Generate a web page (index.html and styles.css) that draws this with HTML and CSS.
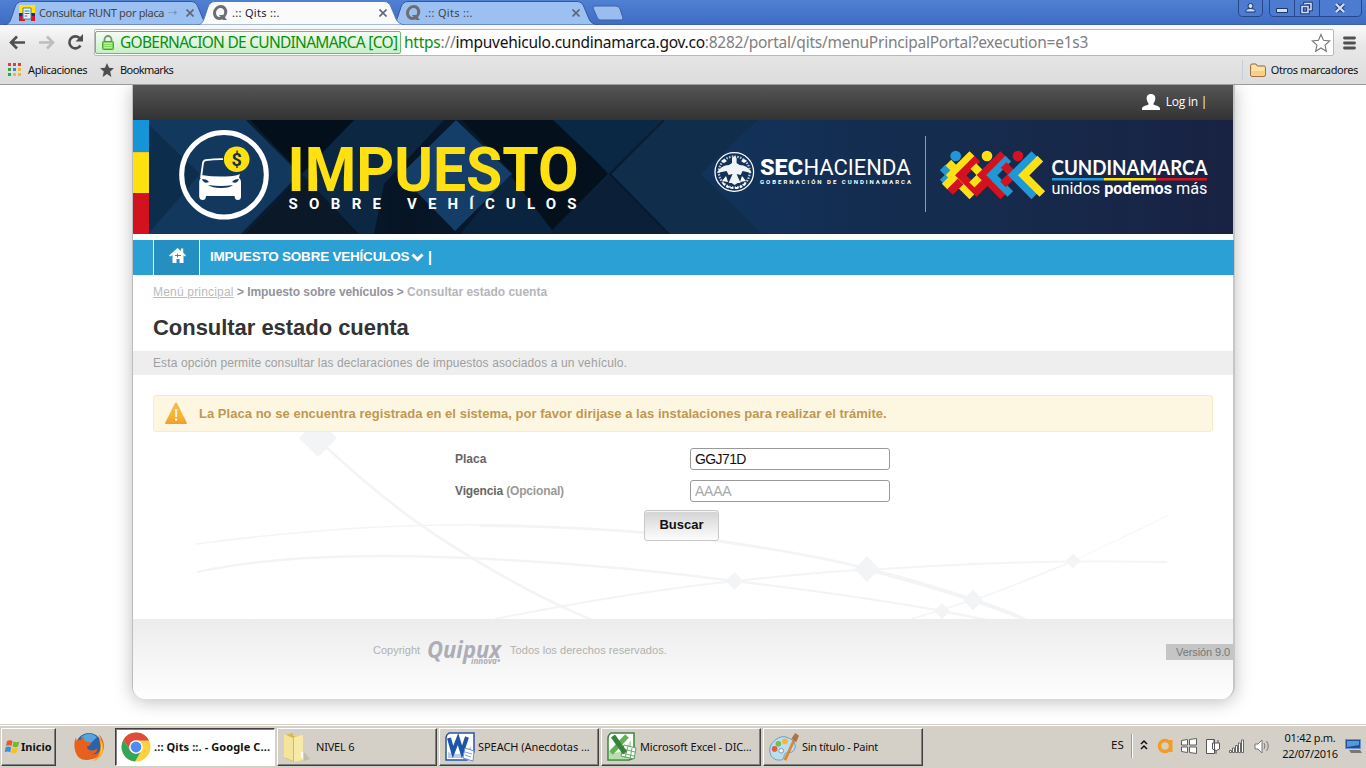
FILE: index.html
```html
<!DOCTYPE html>
<html lang="es">
<head>
<meta charset="utf-8">
<title>.:: Qits ::.</title>
<link rel="stylesheet" href="styles.css">
</head>
<body>
<header class="tabstrip">
  <div class="tab tab-first">
    <svg class="tab-shape" viewBox="0 0 208 25"><path d="M0 25C5 24.500 6 22 8 16L11 7Q13 1.500 18 1.500H187Q192 1.500 194 7L199 19Q201 24 208 25Z"/></svg>
    <svg class="fav" viewBox="0 0 16 16"><path fill="#ffe600" d="M0 0h16v8H0z"/><path fill="#17308c" d="M0 8h16v5H0z"/><path fill="#d5172b" d="M0 11h6v5H0zM12 11h4v5h-4z"/><path fill="#eef5fa" stroke="#557e9b" d="M4 3h8v11H4z"/><path stroke="#3b718f" d="M5.500 6h5M5.500 8.500h5M5.500 11h3"/></svg>
    <span class="tab-title title-runt">Consultar RUNT por placa</span><span class="tab-fade">⇢</span><svg class="close" viewBox="0 0 8 8"><path d="M.5.5l7 7M7.500.5l-7 7"/></svg>
  </div>
  <div class="tab tab-active">
    <svg class="tab-shape" viewBox="0 0 208 25"><path d="M0 25C5 24.500 6 22 8 16L11 7Q13 1.500 18 1.500H187Q192 1.500 194 7L199 19Q201 24 208 25Z"/></svg>
    <svg class="fav" viewBox="0 0 16 16"><ellipse cx="8.200" cy="7.500" rx="5.600" ry="6" fill="none" stroke="#6d6e73" stroke-width="3" transform="skewX(-6) translate(.7 0)"/><path d="M7 10h4l4 5h-4z" fill="#6d6e73"/></svg>
    <span class="tab-title">.:: Qits ::.</span><svg class="close" viewBox="0 0 8 8"><path d="M.5.5l7 7M7.500.5l-7 7"/></svg>
  </div>
  <div class="tab tab-last">
    <svg class="tab-shape" viewBox="0 0 208 25"><path d="M0 25C5 24.500 6 22 8 16L11 7Q13 1.500 18 1.500H187Q192 1.500 194 7L199 19Q201 24 208 25Z"/></svg>
    <svg class="fav" viewBox="0 0 16 16"><ellipse cx="8.200" cy="7.500" rx="5.600" ry="6" fill="none" stroke="#6d6e73" stroke-width="3" transform="skewX(-6) translate(.7 0)"/><path d="M7 10h4l4 5h-4z" fill="#6d6e73"/></svg>
    <span class="tab-title">.:: Qits ::.</span><svg class="close" viewBox="0 0 8 8"><path d="M.5.5l7 7M7.500.5l-7 7"/></svg>
  </div>
  <svg class="newtab" viewBox="0 0 32 16"><path d="M1 3Q1 1 3 1H24Q27 1 28 4L31 13Q31 15 29 15H8Q6 15 5 12Z"/></svg>
  <svg class="winbtns" viewBox="0 0 126 18">
    <g fill="#4c7bd0" stroke="#27478a"><path d="M.5-1V12Q.5 16.500 5 16.500H20Q24.500 16.500 24.500 12V-1ZM31.500-1V12Q31.500 16.500 36 16.500H119Q123.500 16.500 123.500 12V-1ZM56.500-1V16M81.500-1V16"/></g>
    <g fill="#cfddf7" stroke="#1c3768"><circle cx="12.500" cy="6" r="2.500"/><path d="M8 12V10.500Q8 8.500 12.500 8.500T17 10.500V12ZM38.500 8.500h11v4h-11z"/><path fill="none" stroke="#1c3768" stroke-width="3.400" d="M67 4.500V3.500H73V9.500H71M64 6.500h6v6h-6z"/><path fill="none" stroke="#cfddf7" stroke-width="1.600" d="M67 4.500V3.500H73V9.500H71M64 6.500h6v6h-6z"/><path fill="none" stroke="#1c3768" stroke-width="4" d="M98.500 4.500l7 7M105.500 4.500l-7 7"/><path fill="none" stroke="#cfddf7" stroke-width="2.400" d="M98 4l8 8M106 4l-8 8"/></g>
  </svg>
</header>

<section class="toolbar">
  <div class="navrow">
    <svg class="nav-icons" viewBox="0 0 94 28">
      <g fill="none" stroke-width="2.600"><path stroke="#4f4f4f" d="M25 13.500H11M17 7.500l-6 6 6 6"/><path stroke="#bdbdbd" d="M39 13.500H53M47 7.500l6 6-6 6"/><path stroke="#4f4f4f" d="M80.500 16.500A6 6 0 1 1 79.500 9"/></g><path fill="#4f4f4f" d="M83 5v7.500h-7.500z"/>
    </svg>
    <div class="omnibox">
      <div class="ev"><svg viewBox="0 0 12 15"><path d="M2.500 7V4.500a3.500 3.500 0 0 1 7 0V7" fill="none" stroke="#7c9478" stroke-width="1.800"/><rect x=".6" y="6.500" width="10.800" height="8" rx=".8" fill="#85d663" stroke="#4aa032"/><path stroke="#bdeca9" d="M2 8.500h8M2 10.500h8M2 12.500h8"/></svg><span>GOBERNACION DE CUNDINAMARCA [CO]</span></div>
      <div class="url"><span class="url-s">https</span><span class="url-m">://</span>impuvehiculo.cundinamarca.gov.co<span class="url-m">:8282/portal/qits/menuPrincipalPortal?execution=e1s3</span></div>
      <svg class="star" viewBox="0 0 20 20"><path d="M10 1.500l2.500 5.800 6.200.6-4.700 4.200 1.400 6.200-5.400-3.300-5.400 3.300 1.400-6.200L1.300 7.900l6.200-.6z" fill="#fff" stroke="#777" stroke-width="1.100"/></svg>
    </div>
    <svg class="menu" viewBox="0 0 13 14"><path stroke="#505050" stroke-width="2.800" stroke-linecap="round" d="M1.500 2h10M1.500 7h10M1.500 12h10"/></svg>
  </div>
  <div class="bookmarks">
    <svg class="apps" viewBox="0 0 14 14"><path fill="#e33e36" d="M0 0h3v3H0zM5 0h3v3H5zM10 0h3v3h-3z"/><path fill="#32a050" d="M0 5h3v3H0zM0 10h3v3H0z"/><path fill="#3a83ee" d="M5 5h3v3H5z"/><path fill="#f7b529" d="M10 5h3v3h-3zM5 10h3v3H5zM10 10h3v3h-3z"/></svg>
    <span class="bm-apps">Aplicaciones</span>
    <svg class="bm-star" viewBox="0 0 14 14"><path fill="#4e4e4e" d="M7 0l2 4.800 5 .4-3.800 3.300L11.400 14 7 11 2.600 14l1.200-5.500L0 5.200l5-.4z"/></svg>
    <span class="bm-marks">Bookmarks</span>
    <div class="others"><svg viewBox="0 0 16 14"><path fill="#fde3a5" stroke="#98653b" d="M.6 12V2.500Q.6 1 2 1H6l1.300 2H14q1.400 0 1.400 1.400V12q0 1.400-1.400 1.400H2Q.6 13.400.6 12z"/><path fill="#f8cf82" d="M2 8h12v4.500H2z"/></svg><span>Otros marcadores</span></div>
  </div>
</section>

<main class="viewport">
  <div class="page">
    <div class="topbar"><svg viewBox="0 0 18 17"><path fill="#fff" d="M9 0c3.200 0 4.600 2.300 4.300 5-.2 2-1 3.300-1.700 4.200v1.600c3.200.8 6.400 1.700 6.400 4V16H0v-1.200c0-2.300 3.200-3.200 6.400-4V9.200C5.700 8.300 4.900 7 4.700 5 4.400 2.300 5.800 0 9 0z"/></svg><span>Log in |</span></div>
    <svg class="banner" viewBox="133 120 1100 114">
      <defs>
        <linearGradient id="b0" x1="0" x2="1"><stop offset="0" stop-color="#0c2c4c"/><stop offset=".25" stop-color="#061424"/><stop offset=".4" stop-color="#0a2038"/><stop offset=".53" stop-color="#112f4e"/><stop offset=".75" stop-color="#152c4e"/><stop offset="1" stop-color="#192243"/></linearGradient>
        <linearGradient id="b2" x1="0" x2="1"><stop offset="0" stop-color="#12335b"/><stop offset="1" stop-color="#142c4e"/></linearGradient>
      </defs>
      <path fill="url(#b0)" d="M133 120h1100v114H133z"/>
      <path fill="#12385e" d="M149 120h98l54 54-58 60H149z"/><path fill="#0d2d4c" d="M149 125l51 49-51 59z"/>
      <path fill="#03101c" d="M250 120h105l-53 54z"/><path fill="#0a1827" d="M302 176l-57 58h112z"/>
      <path fill="#0b2742" d="M354 120h90l-60 64-10 50h-15l-57-60z"/>
      <path fill="#143e68" d="M456 120l56 54-57 57-55-56z"/><path fill="#04111d" d="M462 120h96l50 54-60 60H460l53-60z"/>
      <path fill="#0a2440" d="M510 175l45 59h-95z"/>
      <path fill="#0a2743" d="M553 120h105l-48 54z"/><path fill="#0b2038" d="M610 174l58 60H550z"/>
      <path fill="#102e4c" d="M663 120h95l-57 54 61 60h-93l-58-60z"/><path fill="url(#b2)" d="M758 120h142v114H763l-62-60z"/>
      <path fill="none" stroke="#06121f" stroke-width="2" opacity=".6" d="M664 120l-54 54 59 60M247 120l54 54-59 60"/>
      <path fill="#1595d8" d="M133 120h16v32h-16z"/><path fill="#ffe111" d="M133 152.500h16V193h-16z"/><path fill="#d3121f" d="M133 193h16v41h-16z"/><path fill="#f0ca25" d="M133 152h16v1h-16z"/>
      <circle cx="224" cy="174.700" r="42.300" fill="none" stroke="#fff" stroke-width="5"/>
      <path fill="none" stroke="#fff" stroke-width="1.800" d="M201 178l2-15q.5-2.500 3-2.800 9-1.200 17-1"/>
      <path fill="#fff" d="M201 175q10 1.500 20 1.500t17-1.500q3-2 2-1.500l-1 4q2 2 2 5v14q0 3.500-3.200 3.500t-3.200-4H206q0 4-3.200 4t-3.600-3.500V183q0-4 1.800-5z"/>
      <path fill="#12385e" d="M202 179q5 0 7 3-5 2.500-7-3zM239 179q-5 0-7 3 5 2.500 7-3zM208 185q13 2 25 0-3 3-12 3t-13-3z"/>
      <circle cx="236.700" cy="159.300" r="12.800" fill="#ffe111"/><text class="b-coin" x="236.700" y="166">$</text>
      <text class="b-impuesto" x="287.500" y="190.800" textLength="291" lengthAdjust="spacingAndGlyphs">IMPUESTO</text>
      <text class="b-sobre" x="288.500" y="209" textLength="92.500">SOBRE</text><text class="b-sobre" x="407" y="209" textLength="169.500">VEHÍCULOS</text>
      <g fill="none" stroke="#fff"><circle cx="734.300" cy="172" r="19.300" stroke-width="1.300"/><circle cx="734.300" cy="172" r="15.500" stroke-width="2.200" stroke-dasharray="1.500 1.300" opacity=".75"/><path stroke-width="2" d="M723 183q3 5 11.300 5t11.300-5" stroke-dasharray="3 1.500"/></g>
      <path fill="#f0f4f8" d="M717 173q4-8 12-8l3-2v-5l2.300-2 2.300 2v5l3 2q8 0 12 8l-9-2-2 4-4-1 4 9h-3l-3 2-3-2h-3l4-9-4 1-2-4z"/><path fill="#fff" d="M724 159l3 2-3 2-3-2zM744 159l3 2-3 2-3-2zM722 181l4-5 2 6zM746 181l-4-5-2 6z"/>
      <text class="b-sec" x="760" y="174.500" textLength="43" lengthAdjust="spacingAndGlyphs">SEC</text><text class="b-hac" x="803.500" y="174.500" textLength="107" lengthAdjust="spacingAndGlyphs">HACIENDA</text>
      <text class="b-gob" x="760" y="183.500" textLength="151">GOBERNACIÓN DE CUNDINAMARCA</text>
      <path stroke="#8d9cb5" d="M925.500 136v76"/>
      <g transform="translate(900 110) scale(.3333)" fill="none" stroke-width="24">
        <path stroke="#2097d6" d="M128 172l23 23-23 23"/>
        <path stroke="#ffe111" d="M145 158l28 28M217 132l-63 63 63 64M134 230l32-32"/>
        <path stroke="#d3121f" d="M232 146l-50 50 56 56M150 246l32-32"/>
        <path stroke="#ffe111" d="M220 168l26 27-30 30"/>
        <path stroke="#d3121f" d="M310 132l-63 63 63 64"/>
        <path stroke="#2097d6" d="M325 146l-50 50 56 56"/><path stroke="#d3121f" d="M228 245l40-40"/>
        <path stroke="#d3121f" d="M311 165l28 28-30 30"/>
        <path stroke="#2097d6" d="M403 132l-63 63 63 64"/>
        <path stroke="#ffe111" d="M421 146l-50 50 56 56"/>
        <circle cx="167" cy="138" r="16" fill="#2097d6" stroke="none"/><circle cx="261" cy="138" r="16" fill="#ffe111" stroke="none"/><circle cx="354" cy="138" r="16" fill="#d3121f" stroke="none"/>
      </g>
      <text class="b-cund" x="1051.500" y="174.500" textLength="156" lengthAdjust="spacingAndGlyphs">CUNDINAMARCA</text>
      <path fill="#2097d6" d="M1052 178h52v2.500h-52z"/><path fill="#ffe111" d="M1104 178h52v2.500h-52z"/><path fill="#d3121f" d="M1156 178h51v2.500h-51z"/>
      <text class="b-uni" x="1051.500" y="194" textLength="156" lengthAdjust="spacingAndGlyphs">unidos <tspan class="b-strong">podemos</tspan> más</text>
    </svg>
    <nav class="mainnav">
      <a class="home"><svg viewBox="0 0 17 16"><path fill="#fff" d="M8.500 0L12 3V.5h2.200v4.300L17 7.500l-1 .9-1.500-1.200V15H10.500v-4h-3v4h-4V7.200L1 8.400l-1-.9z"/><path stroke="#268fc1" d="M6 7.500h6M8.500 5.500v4"/></svg></a>
      <a class="navitem"><span>IMPUESTO SOBRE VEHÍCULOS</span><svg viewBox="0 0 13 9"><path d="M1.500 1.500l5 5 5-5" fill="none" stroke="#fff" stroke-width="3"/></svg><i>|</i></a>
    </nav>
    <div class="crumbs"><a>Menú principal</a> <b>&gt; Impuesto sobre vehículos &gt; <span>Consultar estado cuenta</span></b></div>
    <h1>Consultar estado cuenta</h1>
    <p class="lead">Esta opción permite consultar las declaraciones de impuestos asociados a un vehículo.</p>
    <div class="alert"><svg viewBox="0 0 22 23"><defs><linearGradient id="w" y2="1" x2="0"><stop stop-color="#f4b55e"/><stop offset=".6" stop-color="#fbb52c"/><stop offset="1" stop-color="#ee9c35"/></linearGradient></defs><path fill="url(#w)" d="M11 .5Q11.700 .5 12.300 1.700L21.700 20.500Q22.300 22 21 22H1Q-.3 22 .3 20.500L9.700 1.700Q10.300 .5 11 .5z"/><path fill="#fff6dc" d="M9.800 7h2.600l-.5 8h-1.600zM10 16.500h2.200v2.200H10z"/></svg><span>La Placa no se encuentra registrada en el sistema, por favor dirijase a las instalaciones para realizar el trámite.</span></div>
    <form class="search">
      <svg class="deco" viewBox="133 432 1100 187">
        <g fill="none" stroke="#f3f4f6"><path stroke-width="2.700" d="M326 447C390 506 430 533 477 561Q535 596 592 620"/><path stroke-width="1.500" d="M196 544Q380 520 530 526"/><path stroke-width="2.800" d="M480 525.500Q620 527 718 541T867 569"/><path stroke-width="4" d="M867 569Q925 584 973 600T1026 621"/><path stroke-width="2.300" d="M197 572Q290 552 440 557T735 581Q860 596 942 611L992 621"/><path stroke-width="1.800" d="M495 619Q630 592 735 581T867 570Q1020 559 1167 562"/><path stroke-width="1.400" d="M912 619Q950 607 973 600T1073 561"/><path stroke-width=".8" d="M1073 561Q1122 538 1169 515"/></g>
        <path fill="#f3f4f6" d="M318 419l19 19-19 19-19-19zM734.500 572l9 9-9 9-9-9zM867 556l12.500 13-12.500 13-12.500-13zM973 589.500l10 10.500-10 10.500-10-10.500zM942 603l8 8-8 8-8-8zM1073 553.500l7.500 7.500-7.500 7.500-7.500-7.500z"/>
      </svg>
      <div class="fields">
        <label for="placa">Placa</label><input id="placa" value="GGJ71D">
        <label for="vig" class="l-vig">Vigencia <span>(Opcional)</span></label><input id="vig" placeholder="AAAA">
      </div>
      <button type="button">Buscar</button>
    </form>
    <footer>
      <div class="copy"><span class="c1">Copyright</span><svg viewBox="0 0 76 28"><text class="q" x="0" y="19" textLength="74" lengthAdjust="spacingAndGlyphs">Quipux</text><text class="inn" x="44" y="25" textLength="29" lengthAdjust="spacingAndGlyphs">innova•</text></svg><span class="c2">Todos los derechos reservados.</span></div>
      <div class="version">Versión 9.0</div>
    </footer>
  </div>
</main>

<div class="taskbar">
  <div class="start"><svg viewBox="0 0 17 16"><path fill="#e65a2c" d="M3 2q3-1.500 5.500 0L7.500 7Q5 5.500 2 7z"/><path fill="#78b52e" d="M9.500 2.500q3 1.500 6 0L14 7.500q-2.500 1.500-5.500 0z"/><path fill="#3b8ed8" d="M1.700 8.200q3-1.500 5.500 0l-1 5q-2.500-1.500-5.500 0z"/><path fill="#f9c126" d="M8.200 8.700q3 1.500 5.700 0l-1.300 5q-2.500 1.500-5.500 0z"/></svg><b>Inicio</b></div>
  <svg class="firefox" viewBox="0 0 30 30"><circle cx="15" cy="14" r="13" fill="#2b62a8"/><path fill="#54a6dc" d="M7 5q8-7 16 0l-6 6-8-1z"/><path fill="#e8601c" d="M2 5q0 3 1 4 2-2 4-1.500Q8 5 10 4.500 9 8 12 9.500l5 1q0 3-4 4 0 3 4 4 4 .5 6-2 1 4-5 6 8 0 9-8 1-7-2-12 5 5 5 12-1 11-14 13Q5 30 1.500 20-1 12 2 5z"/><path fill="#f8a620" d="M25 5q5 5 4.500 13-2 9-11 11.500Q27 24 26.500 14z"/><path fill="#fbcf3d" d="M27.500 10q2.500 8-2 14 2-6 2-14z"/></svg>
  <div class="task active"><svg viewBox="0 0 30 30"><circle cx="15" cy="15" r="14.500" fill="#fdd23e"/><path fill="#df4b3f" d="M2.500 7.700A14.500 14.500 0 0 1 28 8.500H15a6.500 6.500 0 0 0-6 9.500z"/><path fill="#35a359" d="M2.500 7.700A14.500 14.500 0 0 0 14 29.500L20.600 18A6.500 6.500 0 0 1 9 18z"/><circle cx="15" cy="15" r="6.800" fill="#fff"/><circle cx="15" cy="15" r="5.400" fill="#4c8bf5"/></svg><b>.:: Qits ::. - Google C...</b></div>
  <div class="task"><svg viewBox="0 0 30 30"><path fill="#d8b952" d="M2 3l8-2v3l10 0v24l-9 2-9-4z"/><path fill="#f5e49b" d="M1 2l9 4v23l-9-4z"/><path fill="#f7eaa9" d="M11 5l9-2v25l-9 2z"/><path fill="#b7b3a0" opacity=".7" d="M21 20l6 7-6 2z"/><path fill="#fff" d="M18 20h2v6h-2z"/></svg><span>NIVEL 6</span></div>
  <div class="task t-word"><svg viewBox="0 0 30 30"><path fill="#fff" stroke="#2456a4" stroke-width="1.500" d="M4 1h25v19l-7 8H1V6q0-3 3-5z"/><path fill="#b9cdea" d="M3 20q14 6 23-6v12H3z"/><path fill="none" stroke="#1e55a8" stroke-width="4" d="M4 6l4 14 5-13 4 13L22 5"/><path fill="#fff" stroke="#6b92c4" d="M20 16l9 3-1 10-10-3z"/><path stroke="#7ea2cf" d="M20 20l7 2M20 23l6 2"/></svg><span>SPEACH (Anecdotas ...</span></div>
  <div class="task t-excel"><svg viewBox="0 0 30 30"><path fill="#fff" stroke="#3a8639" stroke-width="1.500" d="M4 1h23v25l-5 2H1V6q0-3 3-5z"/><path fill="#b9dcb1" d="M2 20q14 4 22-12v19H2z"/><path fill="#fff" stroke="#5ba357" d="M17 13l12 3-2 11-13-3z"/><path stroke="#69ae64" d="M16 17l12 3M15 21l12 3M21 14l-3 12M25 16l-2 11"/><path stroke="#62b253" stroke-width="5" d="M20 4L4 21"/><path stroke="#34843a" stroke-width="5" d="M6 4l12 17"/></svg><span>Microsoft Excel - DIC...</span></div>
  <div class="task t-paint"><svg viewBox="0 0 32 30"><path fill="#bcdcf0" stroke="#659bc0" d="M2 24Q-2 15 6 8T22 6q6 2 6 9-1 6-7 6-5 0-5 4t-5 4q-6 0-9-5z"/><circle cx="6" cy="17" r="3" fill="#e35a3c"/><circle cx="10" cy="11.500" r="3" fill="#76bd4c"/><circle cx="17" cy="9" r="3" fill="#f7b635"/><circle cx="13" cy="19" r="2.500" fill="#edf6fa" stroke="#7199b5"/><path stroke="#d98835" stroke-width="3" d="M17 29L27 7"/><path fill="#a97645" d="M24 6l4-6 4 3-3 7z"/></svg><span>Sin título - Paint</span></div>
  <div class="tray">
    <span class="lang">ES</span><i class="sep"></i>
    <svg class="tray-icons" viewBox="0 0 140 22"><g fill="none"><path stroke="#111" stroke-width="1.500" d="M4 9l3-3 3 3M4 14l3-3 3 3"/><circle cx="28" cy="11" r="5.500" stroke="#f49b22" stroke-width="3.500"/><path stroke="#f49b22" stroke-width="3" d="M34 5v12"/><path stroke="#5f5f5f" fill="#fff" d="M44.500 5.500l6-1V10h-6zM52.500 4.500l7-1V10h-7zM44.500 12h6v5.500l-6-1zM52.500 12h7v6.500l-7-1z"/><path stroke="#555" fill="#fff" d="M69.500 4.500h8v14h-8zM75.500 8h7v6q-3 3-7 0zM77 8V5M81 8V5M79 15v4"/><path stroke="#666" fill="#fff" d="M92.500 15.500h2v2h-2zM95.500 13h2v4.500h-2zM98.500 10.500h2v7h-2zM101.500 8h2v9.500h-2zM104.500 5h2v12.500h-2z"/><path stroke="#777" fill="#fff" d="M118 9h3l4-4v13l-4-4h-3z"/><path stroke="#777" d="M127 8q2 3 0 6M129.500 6q3.500 5 0 10"/></g></svg>
    <div class="clock"><span>01:42 p.m.</span><span>22/07/2016</span></div>
    <svg class="desk" viewBox="0 0 17 15"><path fill="#244d94" stroke="#6e91c7" d="M.5.5h15v9H.5z"/><path fill="#4f9be0" d="M2 2h12v4L2 8z"/><path fill="#777" d="M4 11h11l2 3H6z"/></svg>
  </div>
</div>
</body>
</html>
```

FILE: styles.css
```css
* { box-sizing: border-box; }
html, body { margin: 0; height: 768px; overflow: hidden; }
body { display: flex; flex-direction: column; background: #fff; font-family: "Liberation Sans", Arial, sans-serif; }
svg { display: block; flex: none; }

.tabstrip { height: 25px; flex: none; display: flex; align-items: flex-start; padding-left: 4px; background: linear-gradient(#4f80d2, #3f6dc5); font: 11px "Noto Sans", sans-serif; color: #444; border-bottom: 1px solid #3a62ad; }
.tab { position: relative; width: 208px; height: 25px; flex: none; display: flex; align-items: center; padding-left: 15px; margin-right: -15px; }
.tab > * { position: relative; }
.tab .tab-shape { position: absolute; left: 0; top: 0; width: 100%; height: 25px; }
.tab-shape path { fill: #9dc0f3; stroke: #36599d; }
.tab-active { z-index: 2; color: #222; }
.tab-active .tab-shape path { fill: #fafafa; stroke: #557ebf; }
.tab-last { margin-right: -6px; }
.fav { width: 16px; height: 16px; margin-right: 4px; }
.tab-title { letter-spacing: .3px; padding-bottom: 1px; }
.title-runt { letter-spacing: -.33px; }
.tab-fade { margin-left: 4px; padding-bottom: 2px; color: #7090c0; }
.close { position: absolute !important; left: 182px; top: 9px; width: 8px; height: 8px; }
.close path { stroke: #5c6778; stroke-width: 1.600; }
.newtab { width: 32px; height: 16px; margin-top: 5px; }
.newtab path { fill: #9bbcee; stroke: #3c63aa; }
.winbtns { width: 126px; height: 18px; margin-left: auto; margin-right: 2px; }

.toolbar { height: 60px; flex: none; background: linear-gradient(#fafafa, #e8e8e8 35%, #dcdcdc); border-bottom: 1px solid #9b9b9b; }
.navrow { display: flex; padding-top: 4px; height: 32px; }
.nav-icons { width: 94px; height: 28px; }
.omnibox { width: 1240px; height: 27px; display: flex; align-items: center; background: #fff; border: 1px solid #b9b9b9; border-radius: 2px; font: 15.500px "Noto Sans", sans-serif; white-space: nowrap; }
.ev { width: 306px; flex: none; height: 23px; display: flex; align-items: center; padding-left: 6px; gap: 6px; border: 1px solid #6dbb6d; border-radius: 2px; background: linear-gradient(#f4fcf4, #c8efc8); color: #0c8f0c; }
.ev svg { width: 12px; height: 15px; }
.ev span { letter-spacing: -.72px; padding-bottom: 1px; }
.url { margin-left: 3px; padding-bottom: 1px; color: #111; letter-spacing: -.245px; }
.url-s { color: #0c8f0c; }
.url-m { color: #808080; }
.star { width: 20px; height: 20px; margin-left: auto; margin-right: 2px; }
.menu { width: 13px; height: 14px; margin: 7px 0 0 9px; }
.bookmarks { display: flex; align-items: center; height: 26px; padding-left: 8px; font: 11px "Noto Sans", sans-serif; color: #111; }
.apps { width: 14px; height: 14px; margin-right: 6px; }
.bm-apps { width: 72px; letter-spacing: -.4px; padding-bottom: 1px; }
.bm-star { width: 14px; height: 14px; margin-right: 6px; }
.bm-marks { letter-spacing: -.58px; padding-bottom: 1px; }
.others { margin-left: auto; display: flex; align-items: center; gap: 5px; border-left: 1px solid #c3d0dc; height: 20px; padding: 0 8px 0 7px; letter-spacing: -.37px; }
.others span { padding-bottom: 1px; }
.others svg { width: 16px; height: 14px; }

.viewport { height: 639px; flex: none; padding-left: 132px; overflow: hidden; }
.page { width: 1103px; height: 614px; overflow: visible; border: solid #bdbdbd; border-width: 0 2px 0 1px; border-right-color: #c6c6c6; border-radius: 0 0 13px 13px; background: #fff; box-shadow: 0 3px 18px rgba(0,0,0,.25); }
.topbar { height: 35px; display: flex; align-items: center; justify-content: flex-end; padding-right: 26px; gap: 6px; background: linear-gradient(#555, #333); color: #fff; font: 12px "Open Sans", sans-serif; letter-spacing: -.25px; }
.topbar span { padding-bottom: 2px; }
.topbar svg { width: 18px; height: 17px; }
.banner { width: 1100px; height: 114px; }
.banner text { fill: #fff; font-family: Roboto, sans-serif; }
.banner .b-coin { font: bold 18px Roboto; fill: #14304a; text-anchor: middle; }
.banner .b-impuesto { font-size: 61.500px; font-weight: 700; fill: #ffe111; }
.b-sobre { font-size: 15px; font-weight: 700; }
.b-sec { font-size: 22.500px; font-weight: 900; }
.b-hac { font-size: 22.500px; font-weight: 400; }
.b-gob { font-size: 6px; font-weight: 700; }
.banner .b-cund { font-family: Lato, sans-serif; font-size: 21.500px; font-weight: 700; }
.b-uni { font-size: 16px; }
.b-strong { font-weight: 700; }
.mainnav { width: 1101px; height: 35px; margin-top: 6px; display: flex; padding-left: 20px; background: #2aa0d5; color: #fff; }
.home { width: 47px; display: flex; align-items: center; justify-content: center; background: #268fc1; border: solid #fff; border-width: 0 1px; padding: 0 0 4px 1px; }
.home svg { width: 17px; height: 16px; }
.navitem { display: flex; align-items: center; padding-left: 10px; font-size: 14px; font-weight: 700; height: 33px; white-space: nowrap; }
.navitem span { width: 201px; font-size: 13.500px; letter-spacing: -.22px; }
.navitem svg { width: 13px; height: 9px; margin-top: 1px; }
.navitem i { font-style: normal; margin-left: 4px; }
.crumbs { padding: 10px 20px 0; height: 38px; font-size: 12px; line-height: 14px; color: #bbb; }
.crumbs a { text-decoration: underline; letter-spacing: .19px; }
.crumbs b { color: #93939c; letter-spacing: -.07px; }
.crumbs b span { color: #b5b5bb; letter-spacing: 0; }
h1 { margin: 0; padding-left: 20px; height: 38px; font-size: 22px; line-height: 29px; letter-spacing: -.04px; color: #333; }
.lead { margin: 0; height: 24px; padding-left: 20px; line-height: 24px; font-size: 12px; letter-spacing: .115px; color: #9f9f9f; background: #eee; }
.alert { height: 37px; margin: 20px 20px 0; display: flex; align-items: center; gap: 12px; padding-left: 11px; background: #fdf7e1; border: 1px solid #faebc8; border-radius: 3px; color: #c09853; font-size: 13px; font-weight: 700; letter-spacing: .03px; }
.alert svg { width: 22px; height: 23px; }
.search { position: relative; height: 187px; margin: 0; padding-top: 16px; }
.deco { position: absolute; left: 0; top: 0; width: 1100px; height: 187px; }
.fields { position: relative; display: grid; grid-template-columns: 235px 200px; grid-auto-rows: 22px; row-gap: 10px; margin-left: 322px; align-items: center; font-size: 12px; font-weight: 700; color: #666; }
.fields label span { color: #999; }
.fields .l-vig { letter-spacing: -.15px; }
.fields input { width: 200px; height: 22px; margin: 0; padding: 0 4px; border: 1px solid #999; border-radius: 3px; background: #fff; color: #111; font: 14px "Liberation Sans", Arial, sans-serif; letter-spacing: -.6px; }
.fields input::placeholder { color: #a9a9a9; letter-spacing: -.25px; }
.search button { position: relative; display: block; width: 75px; height: 31px; margin: 8px 0 0 511px; padding: 0 0 2px; border: 1px solid #c8c8c8; border-radius: 3px; background: linear-gradient(#d3d3d3, #fdfdfd); box-shadow: inset 0 1px #f5f5f5; font: bold 13px "Liberation Sans", Arial, sans-serif; color: #111; }
footer { position: relative; height: 80px; display: flex; justify-content: space-between; padding-left: 240px; background: linear-gradient(#ececec, #fefefe); border-radius: 0 0 12px 12px; font-size: 11px; color: #b1b1b1; }
.copy { display: flex; align-items: center; height: 62px; }
.c1 { width: 54px; }
.copy svg { width: 76px; height: 28px; margin-top: 6px; margin-right: 7px; overflow: visible; }
.c2 { letter-spacing: .05px; }
.q { font: italic bold 24px "Open Sans", sans-serif; fill: #adadb6; }
.inn { font: italic bold 8px "Open Sans", sans-serif; fill: #adadb6; }
.version { width: 67px; height: 16px; margin-top: 25px; padding-left: 10px; line-height: 16px; letter-spacing: -.08px; background: #c5c5c5; color: #777; white-space: nowrap; }

.taskbar { height: 44px; flex: none; display: flex; align-items: flex-start; padding: 3px 4px 0 1px; background: #d4d0c8; border-top: 1px solid #d4d0c8; box-shadow: inset 0 1px #fff; font: 11px "Noto Sans", sans-serif; color: #111; white-space: nowrap; }
.start { width: 55px; height: 38px; display: flex; align-items: center; padding-left: 2px; border: 1px solid; border-color: #fff #404040 #404040 #fff; box-shadow: inset -1px -1px #808080; letter-spacing: 0; }
.start b, .task b, .task span { padding-bottom: 2px; }
.start svg { width: 17px; height: 16px; }
.firefox { width: 30px; height: 30px; margin: 4px 11px 0 18px; }
.task { width: 160px; height: 38px; margin-right: 2px; display: flex; align-items: center; padding-left: 5px; border: 1px solid; border-color: #fff #404040 #404040 #fff; box-shadow: inset -1px -1px #808080; letter-spacing: -.2px; }
.task svg { width: 30px; height: 30px; margin-right: 3px; }
.t-word { letter-spacing: -.05px; }
.t-excel { letter-spacing: -.12px; }
.t-paint { letter-spacing: -.3px; }
.active { background: #fff; border-color: #404040 #fff #fff #404040; box-shadow: inset 1px 1px #808080; letter-spacing: .1px; }
.tray { margin-left: auto; display: flex; align-items: center; height: 36px; }
.lang { width: 20px; font-size: 11.500px; padding-bottom: 3px; }
.sep { width: 2px; height: 24px; border-left: 1px solid #999; border-right: 1px solid #fff; margin-right: 4px; }
.tray-icons { width: 140px; height: 22px; }
.clock { display: flex; flex-direction: column; width: 62px; margin-left: 2px; margin-right: 4px; text-align: center; line-height: 16px; letter-spacing: -.3px; }
.desk { width: 17px; height: 15px; }
```
